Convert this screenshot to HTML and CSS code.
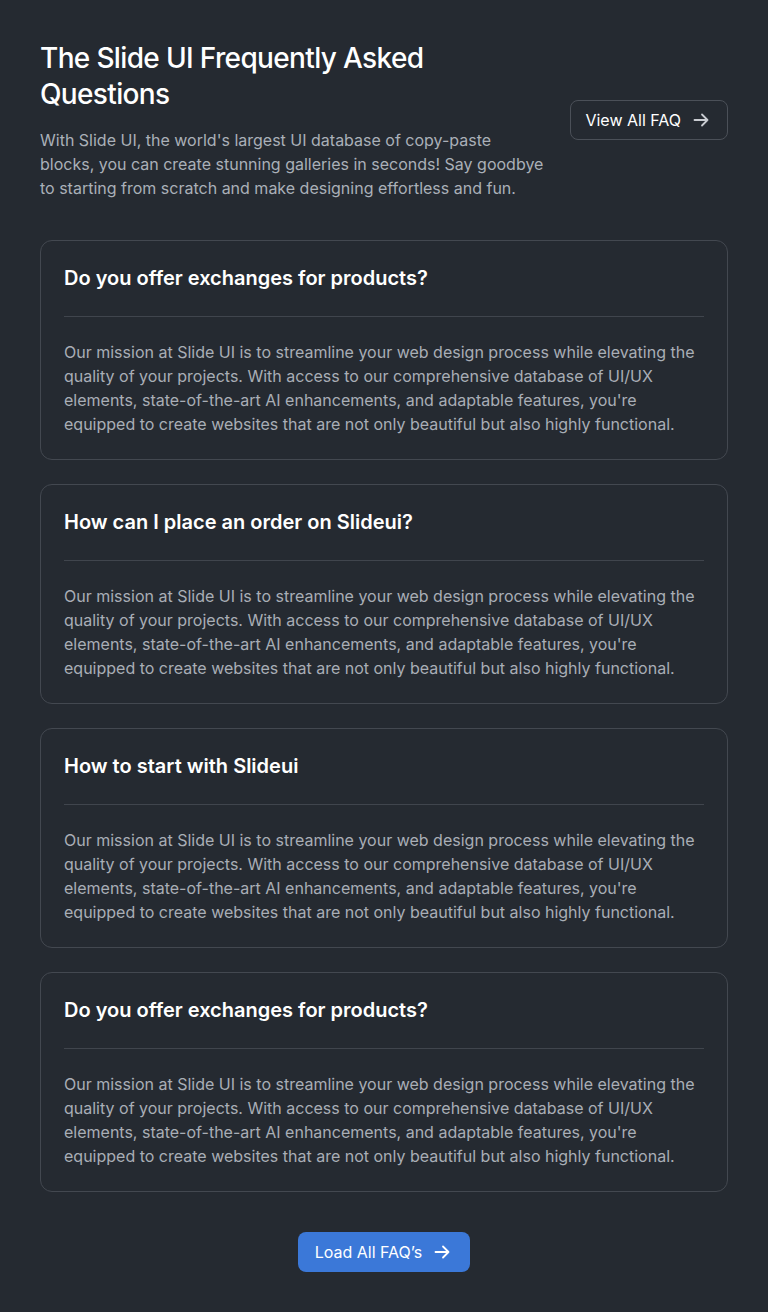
FILE: index.html
```html
<!DOCTYPE html>
<html lang="en">
<head>
<meta charset="utf-8">
<title>FAQ</title>
<link rel="stylesheet" href="styles.css">
</head>
<body>
<main class="page">
  <header class="intro">
    <div class="intro-text">
      <h1 class="title">The Slide UI Frequently Asked Questions</h1>
      <p class="lead">With Slide UI, the world's largest UI database of copy-paste blocks, you can create stunning galleries in seconds! Say goodbye to starting from scratch and make designing effortless and fun.</p>
    </div>
    <a class="btn-outline" href="#">View All FAQ
      <svg class="arrow" width="20" height="20" viewBox="0 0 20 20" fill="none" stroke="currentColor" stroke-width="1.8" stroke-linecap="round" stroke-linejoin="round"><path d="M3.5 10h13M11 4.5 16.5 10 11 15.5"/></svg>
    </a>
  </header>

  <section class="faq-list">
    <article class="faq">
      <h2 class="faq-q">Do you offer exchanges for products?</h2>
      <p class="faq-a">Our mission at Slide UI is to streamline your web design process while elevating the quality of your projects. With access to our comprehensive database of UI/UX elements, state-of-the-art AI enhancements, and adaptable features, you're equipped to create websites that are not only beautiful but also highly functional.</p>
    </article>
    <article class="faq">
      <h2 class="faq-q">How can I place an order on Slideui?</h2>
      <p class="faq-a">Our mission at Slide UI is to streamline your web design process while elevating the quality of your projects. With access to our comprehensive database of UI/UX elements, state-of-the-art AI enhancements, and adaptable features, you're equipped to create websites that are not only beautiful but also highly functional.</p>
    </article>
    <article class="faq">
      <h2 class="faq-q">How to start with Slideui</h2>
      <p class="faq-a">Our mission at Slide UI is to streamline your web design process while elevating the quality of your projects. With access to our comprehensive database of UI/UX elements, state-of-the-art AI enhancements, and adaptable features, you're equipped to create websites that are not only beautiful but also highly functional.</p>
    </article>
    <article class="faq">
      <h2 class="faq-q">Do you offer exchanges for products?</h2>
      <p class="faq-a">Our mission at Slide UI is to streamline your web design process while elevating the quality of your projects. With access to our comprehensive database of UI/UX elements, state-of-the-art AI enhancements, and adaptable features, you're equipped to create websites that are not only beautiful but also highly functional.</p>
    </article>
  </section>

  <div class="more">
    <a class="btn-primary" href="#">Load All FAQ’s
      <svg class="arrow" width="20" height="20" viewBox="0 0 20 20" fill="none" stroke="currentColor" stroke-width="1.8" stroke-linecap="round" stroke-linejoin="round"><path d="M3.5 10h13M11 4.5 16.5 10 11 15.5"/></svg>
    </a>
  </div>
</main>
</body>
</html>
```

FILE: styles.css
```css
* { box-sizing: border-box; }
html, body { margin: 0; padding: 0; }
body {
  background: #252a31;
  font-family: Inter, "Noto Sans", sans-serif;
  color: #f3f4f6;
  -webkit-font-smoothing: antialiased;
}
.page {
  padding: 40px;
  display: flex;
  flex-direction: column;
  gap: 40px;
}
.intro {
  display: flex;
  align-items: center;
  justify-content: space-between;
  gap: 16px;
}
.intro-text { max-width: 505px; }
.title {
  margin: 0;
  font-size: 28px;
  line-height: 36px;
  font-weight: 500;
  letter-spacing: -0.65px;
  color: #ffffff;
}
.lead {
  margin: 16px 0 0;
  font-size: 16px;
  line-height: 24px;
  color: #aab0b8;
}
.btn-outline {
  display: inline-flex;
  align-items: center;
  gap: 10px;
  height: 40px;
  padding: 0 16px 0 14px;
  border: 1px solid #4b5058;
  border-radius: 8px;
  color: #ffffff;
  text-decoration: none;
  font-size: 16px;
  font-weight: 400;
  white-space: nowrap;
  flex-shrink: 0;
}
.btn-outline .arrow { color: #c9ccd1; }
.faq-list {
  display: flex;
  flex-direction: column;
  gap: 24px;
}
.faq {
  border: 1px solid #434850;
  border-radius: 12px;
  padding: 23px;
}
.faq-q {
  margin: 0;
  font-size: 20px;
  line-height: 28px;
  font-weight: 600;
  color: #ffffff;
  padding-bottom: 24px;
  border-bottom: 1px solid #40454d;
}
.faq-a {
  margin: 23px 0 0;
  font-size: 16px;
  line-height: 24px;
  color: #a9aeb6;
}
.more {
  display: flex;
  justify-content: center;
}
.btn-primary {
  display: inline-flex;
  align-items: center;
  gap: 10px;
  height: 40px;
  padding: 0 18px 0 17px;
  background: #3b78d8;
  border-radius: 8px;
  color: #ffffff;
  text-decoration: none;
  font-size: 16px;
  font-weight: 400;
}
```
